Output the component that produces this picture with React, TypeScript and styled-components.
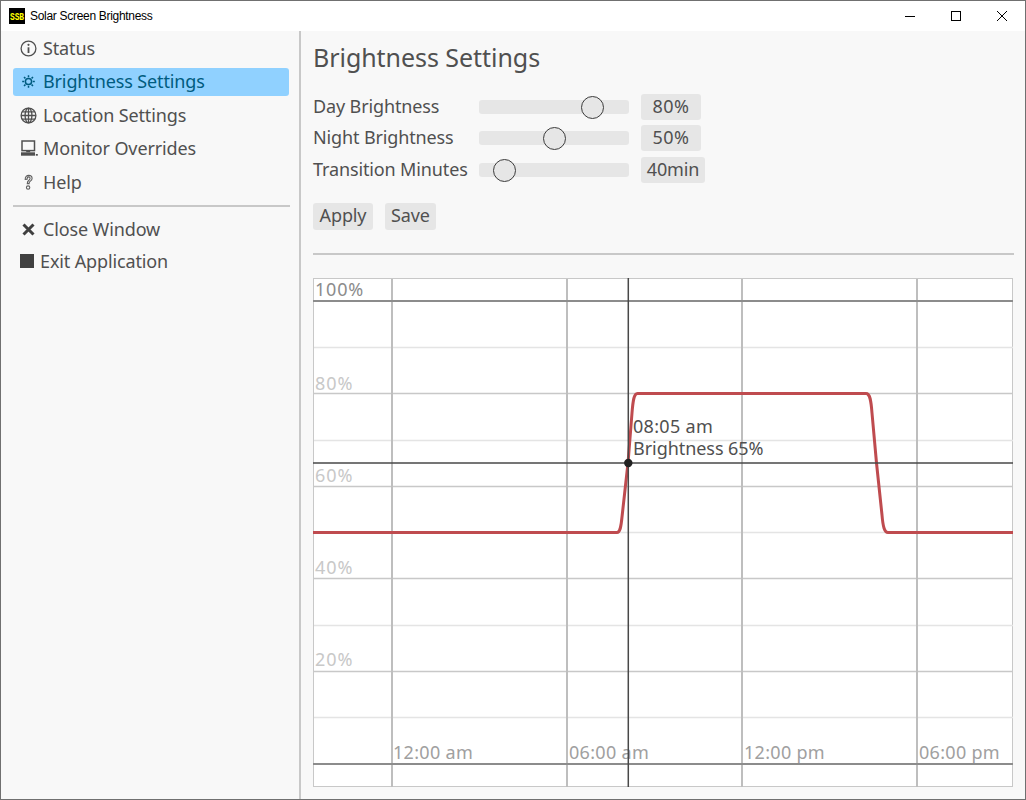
import React from "react";
import styled, { createGlobalStyle } from "styled-components";

const UI_FONT = `"Noto Sans", "Open Sans", sans-serif`;

const Global = createGlobalStyle`
  html, body { margin: 0; padding: 0; background: #f8f8f8; }
  * { box-sizing: border-box; }
`;

const Frame = styled.div`
  width: 1026px;
  height: 800px;
  border: 1px solid #707070;
  display: flex;
  flex-direction: column;
  overflow: hidden;
  background: #f8f8f8;
  color: #505050;
  font-family: ${UI_FONT};
  font-size: 18px;
  letter-spacing: -0.13px;
`;

const TitleBar = styled.header`
  height: 30px;
  flex: none;
  background: #fff;
  display: flex;
  align-items: center;
  padding-left: 8px;
`;

const LogoSvg = styled.svg`
  display: block;
  flex: none;
`;

const LogoText = styled.text`
  font-family: "Liberation Mono", monospace;
  font-size: 8px;
  font-weight: 700;
  fill: #ffff00;
`;

const WindowTitle = styled.span`
  margin-left: 5px;
  font: 12px/16px "Liberation Sans", sans-serif;
  letter-spacing: -0.3px;
  color: #000;
  flex: 1;
`;

const WindowButton = styled.div`
  width: 46px;
  height: 30px;
  display: flex;
  align-items: center;
  justify-content: center;
`;

const Body = styled.div`
  flex: 1;
  display: flex;
  min-height: 0;
`;

const Sidebar = styled.nav`
  width: 300px;
  flex: none;
  border-right: 2px solid #c8c8c8;
  padding: 3px 10px 0 12px;
  display: flex;
  flex-direction: column;
`;

const NavItem = styled.div<{ $active?: boolean; $after: number }>`
  height: 28px;
  margin-bottom: ${(p) => p.$after}px;
  padding-left: 7px;
  padding-bottom: ${(p) => (p.$active ? 2 : 0)}px;
  border-radius: 3px;
  display: flex;
  align-items: center;
  white-space: nowrap;
  background: ${(p) => (p.$active ? "#90d1ff" : "transparent")};
  color: ${(p) => (p.$active ? "#005c80" : "#505050")};
`;

const NavIconSlot = styled.span<{ $width?: number }>`
  width: ${(p) => p.$width ?? 23}px;
  flex: none;
  display: flex;
  align-items: center;
`;

const SideRule = styled.hr`
  width: 277px;
  height: 2px;
  margin: 9px 0 8px;
  border: 0;
  background: #c8c8c8;
`;

const Main = styled.main`
  flex: 1;
  min-width: 0;
  padding: 9px 11px 11px 12px;
  display: flex;
  flex-direction: column;
`;

const Heading = styled.h1`
  margin: 0;
  height: 36px;
  padding-bottom: 2px;
  font-size: 25px;
  font-weight: 400;
  line-height: 34px;
  letter-spacing: -0.05px;
`;

const Sliders = styled.div`
  margin-top: 18px;
  display: flex;
  flex-direction: column;
`;

const SliderRow = styled.div<{ $after: number }>`
  height: 26px;
  margin-bottom: ${(p) => p.$after}px;
  display: flex;
  align-items: center;
`;

const SliderLabel = styled.span`
  width: 166px;
  flex: none;
  padding-bottom: 2px;
  white-space: nowrap;
`;

const Track = styled.div`
  position: relative;
  width: 150px;
  height: 14px;
  border-radius: 3px;
  background: #e6e6e6;
`;

const Thumb = styled.div<{ $center: number }>`
  position: absolute;
  top: -4.5px;
  left: ${(p) => p.$center - 11.5}px;
  width: 23px;
  height: 23px;
  border-radius: 50%;
  border: 1.5px solid #3c3c3c;
  background: #e6e6e6;
`;

const ValueBox = styled.span<{ $width: number; $tracking: number }>`
  width: ${(p) => p.$width}px;
  height: 26px;
  margin-left: 12px;
  padding-bottom: 2px;
  border-radius: 3px;
  background: #e6e6e6;
  letter-spacing: ${(p) => p.$tracking}px;
  display: flex;
  align-items: center;
  justify-content: center;
`;

const Buttons = styled.div`
  margin-top: 20px;
  display: flex;
  gap: 12px;
`;

const Button = styled.span<{ $width: number }>`
  width: ${(p) => p.$width}px;
  height: 27px;
  padding-bottom: 3px;
  border-radius: 3px;
  background: #e6e6e6;
  display: flex;
  align-items: center;
  justify-content: center;
`;

const MainRule = styled.hr`
  width: 100%;
  height: 2px;
  margin: 23px 0;
  border: 0;
  background: #c8c8c8;
  flex: none;
`;

const ChartSvg = styled.svg`
  display: block;
  width: 700px;
  height: 509px;
  flex: none;
`;

const ChartText = styled.text<{ $color: string; $tracking?: number }>`
  font-family: ${UI_FONT};
  font-size: 18px;
  letter-spacing: ${(p) => p.$tracking ?? 0.3}px;
  fill: ${(p) => p.$color};
`;

const InfoIcon = () => (
  <svg width="17" height="17" viewBox="0 0 17 17" fill="none" stroke="#505050">
    <circle cx="8.5" cy="8.5" r="7.4" strokeWidth="1.3" />
    <path d="M8.5 7.3V13" strokeWidth="1.8" />
    <circle cx="8.5" cy="4.8" r="1.1" fill="#505050" stroke="none" />
  </svg>
);

const SunIcon = () => (
  <svg width="17" height="17" viewBox="0 0 17 17" fill="none" stroke="#005c80">
    <circle cx="8.5" cy="8.5" r="3.1" strokeWidth="1.5" />
    <path
      d="M8.5 2.2v2M8.5 12.8v2M2.2 8.5h2M12.8 8.5h2M4 4l1.4 1.4M11.6 11.6L13 13M13 4l-1.4 1.4M5.4 11.6L4 13"
      strokeWidth="1.5"
    />
  </svg>
);

const GlobeIcon = () => (
  <svg width="17" height="17" viewBox="0 0 17 17" fill="none" stroke="#505050" strokeWidth="1.3">
    <circle cx="8.5" cy="8.5" r="7.4" />
    <ellipse cx="8.5" cy="8.5" rx="3.4" ry="7.4" />
    <path d="M8.5 1v15M1.2 8.5h14.6M2.2 4.8h12.6M2.2 12.2h12.6" />
  </svg>
);

const MonitorIcon = () => (
  <svg width="18" height="17" viewBox="0 0 18 17" fill="none">
    <rect x="2" y="1" width="12.5" height="9.6" stroke="#505050" strokeWidth="1.5" />
    <rect x="6.2" y="10.8" width="4" height="1.4" fill="#505050" />
    <rect x="1" y="12.3" width="14" height="3.4" fill="#505050" />
    <rect x="15.8" y="14" width="2" height="1.7" fill="#505050" />
  </svg>
);

const QuestionIcon = () => (
  <svg width="17" height="17" viewBox="0 0 17 17" fill="none" stroke="#606060" strokeWidth="1.1">
    <path d="M5.2 5.4C5.1 2.8 6.8 1.4 8.7 1.4c2 0 3.4 1.3 3.4 3 0 1.6-1 2.3-2 3-.7.5-1 1-1 2.2H7.3c0-1.9.6-2.7 1.6-3.4.8-.6 1.2-1 1.2-1.9 0-.8-.6-1.4-1.5-1.4-1 0-1.5.7-1.5 2.4z" />
    <circle cx="8.1" cy="13.6" r="1.7" />
  </svg>
);

const CrossIcon = () => (
  <svg width="17" height="17" viewBox="0 0 17 17" fill="none" stroke="#404040" strokeWidth="3">
    <path d="M3.5 3.5L13.5 13.5M13.5 3.5L3.5 13.5" />
  </svg>
);

const SquareIcon = () => (
  <svg width="14" height="14" viewBox="0 0 14 14">
    <rect width="14" height="14" fill="#404040" />
  </svg>
);

const rows = [
  { label: "Day Brightness", center: 113.5, value: "80%", width: 60, tracking: 0.5, after: 5 },
  { label: "Night Brightness", center: 75, value: "50%", width: 60, tracking: 0.5, after: 6 },
  { label: "Transition Minutes", center: 25, value: "40min", width: 64, tracking: -0.13, after: 0 },
];

const lightLines = [347.5, 440.5, 532.5, 625.5, 717.5];
const midLines = [393.5, 486.5, 578.5, 671.5];
const darkLines = [301, 764];
const verticals = [392, 567, 742, 917];
const percents = [
  { label: "80%", y: 390 },
  { label: "60%", y: 482 },
  { label: "40%", y: 574 },
  { label: "20%", y: 666 },
];
const times = [
  { label: "12:00 am", x: 393 },
  { label: "06:00 am", x: 569 },
  { label: "12:00 pm", x: 744 },
  { label: "06:00 pm", x: 919 },
];
const curve =
  "M313 532.5 L617 532.5 C620 532.5 621 527 622 517 L628 463 L632 413 C633 400 634 393.5 637.5 393.5 L866 393.5 C870 393.5 871 400 872 413 L876.5 463 L882 515 C883 527 884.5 532.5 888 532.5 L1013 532.5";

export default function App() {
  return (
    <Frame>
      <Global />
      <TitleBar>
        <LogoSvg width="16" height="16" viewBox="0 0 16 16">
          <rect width="16" height="16" fill="#000" />
          <LogoText transform="translate(1 11.5) scale(1 1.25)">SSB</LogoText>
        </LogoSvg>
        <WindowTitle>Solar Screen Brightness</WindowTitle>
        <WindowButton>
          <svg width="10" height="10" viewBox="0 0 10 10" stroke="#000" fill="none">
            <path d="M0 5.5H10" />
          </svg>
        </WindowButton>
        <WindowButton>
          <svg width="10" height="10" viewBox="0 0 10 10" stroke="#000" fill="none">
            <rect x="0.5" y="0.5" width="9" height="9" />
          </svg>
        </WindowButton>
        <WindowButton>
          <svg width="10" height="10" viewBox="0 0 10 10" stroke="#000" fill="none">
            <path d="M0 0L10 10M10 0L0 10" />
          </svg>
        </WindowButton>
      </TitleBar>
      <Body>
        <Sidebar>
          <NavItem $after={6}>
            <NavIconSlot><InfoIcon /></NavIconSlot>Status
          </NavItem>
          <NavItem $active $after={5}>
            <NavIconSlot><SunIcon /></NavIconSlot>Brightness Settings
          </NavItem>
          <NavItem $after={5}>
            <NavIconSlot><GlobeIcon /></NavIconSlot>Location Settings
          </NavItem>
          <NavItem $after={6}>
            <NavIconSlot><MonitorIcon /></NavIconSlot>Monitor Overrides
          </NavItem>
          <NavItem $after={0}>
            <NavIconSlot><QuestionIcon /></NavIconSlot>Help
          </NavItem>
          <SideRule />
          <NavItem $after={4}>
            <NavIconSlot><CrossIcon /></NavIconSlot>Close Window
          </NavItem>
          <NavItem $after={0}>
            <NavIconSlot $width={20}><SquareIcon /></NavIconSlot>Exit Application
          </NavItem>
        </Sidebar>
        <Main>
          <Heading>Brightness Settings</Heading>
          <Sliders>
            {rows.map((r) => (
              <SliderRow key={r.label} $after={r.after}>
                <SliderLabel>{r.label}</SliderLabel>
                <Track>
                  <Thumb $center={r.center} />
                </Track>
                <ValueBox $width={r.width} $tracking={r.tracking}>{r.value}</ValueBox>
              </SliderRow>
            ))}
          </Sliders>
          <Buttons>
            <Button $width={60}>Apply</Button>
            <Button $width={51}>Save</Button>
          </Buttons>
          <MainRule />
          <ChartSvg viewBox="313 278 700 509">
            <rect x="313.5" y="278.5" width="699" height="508" fill="#fff" stroke="#c8c8c8" />
            {lightLines.map((y) => (
              <path key={y} d={`M314 ${y}H1013`} stroke="#e4e4e4" strokeWidth="1.5" />
            ))}
            {midLines.map((y) => (
              <path key={y} d={`M314 ${y}H1013`} stroke="#c8c8c8" strokeWidth="1.5" />
            ))}
            {verticals.map((x) => (
              <path key={x} d={`M${x} 279V787`} stroke="#bebebe" strokeWidth="2" />
            ))}
            {darkLines.map((y) => (
              <path key={y} d={`M313 ${y}H1013`} stroke="#8c8c8c" strokeWidth="2" />
            ))}
            <ChartText $color="#8c8c8c" $tracking={0.8} x="315" y="296">100%</ChartText>
            {percents.map((p) => (
              <ChartText key={p.label} $color="#c8c8c8" $tracking={0.9} x="315" y={p.y}>{p.label}</ChartText>
            ))}
            {times.map((t) => (
              <ChartText key={t.label} $color="#a0a0a0" x={t.x} y="759">{t.label}</ChartText>
            ))}
            <path d={curve} fill="none" stroke="#bf4b4f" strokeWidth="3" />
            <path d="M628.3 278V787M313 463H1013" stroke="#484848" strokeWidth="1.5" />
            <circle cx="628.3" cy="463" r="4.2" fill="#222" />
            <ChartText $color="#505050" x="633" y="433">08:05 am</ChartText>
            <ChartText $color="#505050" $tracking={-0.05} x="633" y="455">Brightness 65%</ChartText>
          </ChartSvg>
        </Main>
      </Body>
    </Frame>
  );
}
